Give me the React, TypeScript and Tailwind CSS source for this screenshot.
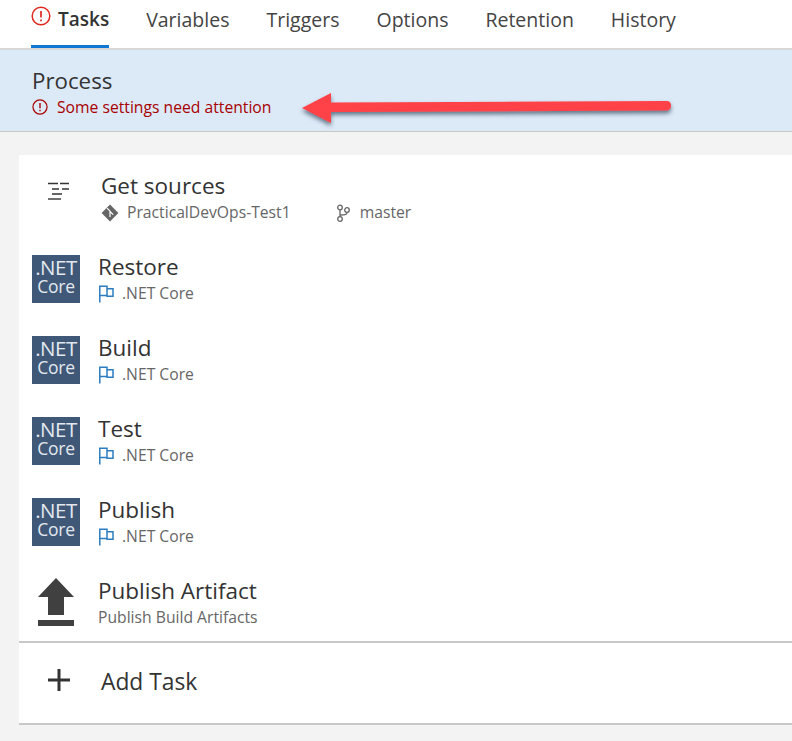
const font = { fontFamily: '"Open Sans", "Noto Sans", sans-serif' };

function AlertIcon({ className }: { className: string }) {
  return (
    <svg viewBox="0 0 20 20" fill="none" stroke="currentColor" className={className}>
      <circle cx="10" cy="10" r="8.8" strokeWidth="1.5" />
      <path d="M10 5v6.5M10 13.500v1.800" strokeWidth="1.7" />
    </svg>
  );
}

function NetCoreIcon() {
  return (
    <div className="flex h-12 w-12 shrink-0 flex-col items-center justify-center bg-[#3f5878] pb-[4px] text-[#e3e8ee]">
      <span className="text-[20.5px] leading-[20px] tracking-[-0.5px]">.NET</span>
      <span className="text-[17.5px] leading-[19px] tracking-[-0.3px]">Core</span>
    </div>
  );
}

function FlagIcon() {
  return (
    <svg viewBox="0 0 16 18" fill="none" stroke="#2b7cc0" strokeWidth="1.5" className="h-[18px] w-4 shrink-0">
      <path d="M1.800 0.500v17M1.800 1.200h7.200v9.300H1.800M9 3.800h6v7.500H9V10.500" />
    </svg>
  );
}

function TaskRow({ title, sub }: { title: string; sub: string }) {
  return (
    <div className="flex h-[81px] items-center gap-[18px] pl-[13px]">
      <NetCoreIcon />
      <div>
        <div className="text-[22.5px] leading-[30px] text-[#333]">{title}</div>
        <div className="mt-px flex h-[22px] items-center gap-2 text-[15.7px] text-[#666]">
          <FlagIcon />
          <span>{sub}</span>
        </div>
      </div>
    </div>
  );
}

const tabs = ["Variables", "Triggers", "Options", "Retention", "History"];

export default function App() {
  return (
    <div style={font} className="relative h-[741px] w-[792px] overflow-hidden bg-[#f3f3f3]">
      <div className="flex h-[50px] items-start gap-[37px] border-b-2 border-[#d8d8d8] bg-white pl-[31px]">
        <div className="flex h-12 items-start gap-[7px] border-b-[3px] border-[#0f78d4] pt-[5px]">
          <AlertIcon className="mt-px h-5 w-5 text-[#e0281f]" />
          <span className="text-[19px] font-semibold leading-7 text-[#333]">Tasks</span>
        </div>
        {tabs.map((tab) => (
          <span key={tab} className="pt-[6px] text-[19.5px] leading-7 text-[#444]">
            {tab}
          </span>
        ))}
      </div>

      <div className="h-[82px] border-b border-[#c8c8c8] bg-[#dce9f7] pl-[32px] pt-[16px]">
        <div className="text-[22.3px] leading-[30px] text-[#333]">Process</div>
        <div className="flex items-center gap-[9px] text-[#a80000]">
          <AlertIcon className="h-4 w-4 text-[#a80000]" />
          <span className="text-[15.7px] leading-[22px]">Some settings need attention</span>
        </div>
      </div>

      <div className="ml-[19px] mt-[23px] bg-white">
        <div className="flex h-[83px] items-center gap-[31px] pl-[29px] pt-[2px]">
          <svg viewBox="0 0 22 18" fill="none" stroke="#333" strokeWidth="1.4" className="mb-[13px] h-[18px] w-[22px] shrink-0">
            <path d="M0 1.500h10M12 1.500h9M4 7h7M14 7h7M4 12h10" />
            <path d="M0 17h13" />
          </svg>
          <div>
            <div className="text-[22.5px] leading-[30px] text-[#333]">Get sources</div>
            <div className="mt-px flex h-[22px] items-center text-[15.7px] text-[#666]">
              <svg viewBox="0 0 18 18" className="mr-[8px] h-[18px] w-[18px] shrink-0">
                <path d="M9 .6 17.400 9 9 17.400.6 9Z" fill="#666" />
                <path d="M6 4.200 9 7.200M9 7v6M9 7.500l3.200 3.200" stroke="#fff" strokeWidth="1.200" fill="none" />
              </svg>
              <span>PracticalDevOps-Test1</span>
              <svg viewBox="0 0 16 18" fill="none" stroke="#666" strokeWidth="1.300" className="ml-[44px] mr-[9px] h-[18px] w-4 shrink-0">
                <circle cx="5" cy="3.500" r="2.300" />
                <circle cx="5" cy="15" r="2.300" />
                <circle cx="12" cy="6" r="2.300" />
                <path d="M5 5.800v7M12 8.300c0 2-1 2.500-7 2.700" />
              </svg>
              <span>master</span>
            </div>
          </div>
        </div>

        <TaskRow title="Restore" sub=".NET Core" />
        <TaskRow title="Build" sub=".NET Core" />
        <TaskRow title="Test" sub=".NET Core" />
        <TaskRow title="Publish" sub=".NET Core" />

        <div className="flex h-[79px] items-center gap-[24px] pl-[19px]">
          <svg viewBox="0 0 36 48" className="h-12 w-9 shrink-0" fill="#404040">
            <path d="M18 0 36 19H26V37H10V19H0Z" />
            <rect x="0" y="42" width="36" height="6" />
          </svg>
          <div>
            <div className="text-[22.5px] leading-[30px] text-[#333]">Publish Artifact</div>
            <div className="text-[15.7px] leading-[22px] text-[#666]">Publish Build Artifacts</div>
          </div>
        </div>

        <div className="flex h-[84px] items-center gap-[31px] border-y-2 border-[#c8c8c8] pb-[2px] pl-[29px]">
          <svg viewBox="0 0 22 22" stroke="#333" strokeWidth="3" className="mb-1 h-[22px] w-[22px] shrink-0">
            <path d="M0 11h22M11 0v22" />
          </svg>
          <span className="text-[22.8px] leading-[30px] text-[#333]">Add Task</span>
        </div>
      </div>

      {/* annotation arrow pasted over the screenshot */}
      <svg viewBox="0 0 792 741" className="pointer-events-none absolute inset-0 h-[741px] w-[792px]">
        <defs>
          <filter id="arrowShadow" x="-5%" y="-40%" width="110%" height="200%">
            <feDropShadow dx="0" dy="3" stdDeviation="2" floodColor="#24384f" floodOpacity="0.65" />
          </filter>
        </defs>
        <path
          d="M302 108 331 93V102.500L666 101C670 101 671 103 671 105.500C671 108 670 110.500 666 110.500L331 112V123Z"
          fill="#ff4246"
          filter="url(#arrowShadow)"
        />
      </svg>
    </div>
  );
}
